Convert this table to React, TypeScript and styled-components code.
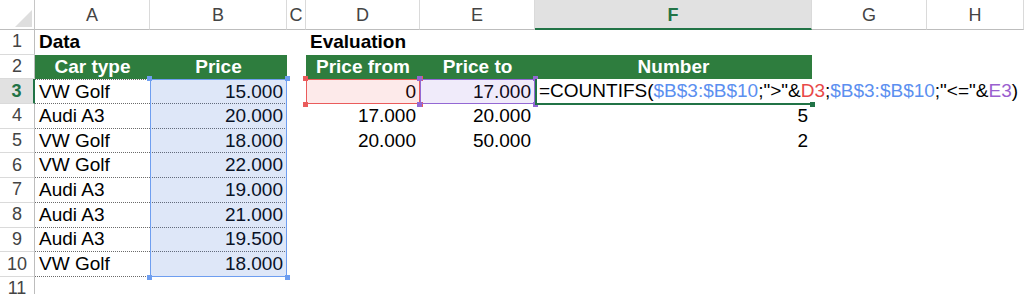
import styled, { createGlobalStyle } from 'styled-components';

const GREEN = '#2e7d3e';
const EXCEL_GREEN = '#217346';
const BLUE = '#6e9ef0';
const RED = '#ea5b5b';
const PURPLE = '#9368d4';
const REF_BLUE = '#5b8ff0';
const REF_RED = '#e84848';
const REF_PURPLE = '#9a60cf';

const GlobalStyle = createGlobalStyle`
  html, body {
    margin: 0;
    padding: 0;
    background: #ffffff;
    overflow: hidden;
  }
  body {
    font-family: "Liberation Sans", Arial, sans-serif;
  }
`;

const columns = ['A', 'B', 'C', 'D', 'E', 'F', 'G', 'H'];

const prices = [
  ['VW Golf', '15.000'],
  ['Audi A3', '20.000'],
  ['VW Golf', '18.000'],
  ['VW Golf', '22.000'],
  ['Audi A3', '19.000'],
  ['Audi A3', '21.000'],
  ['Audi A3', '19.500'],
  ['VW Golf', '18.000'],
];

const ranges = [
  ['17.000', '20.000', '5'],
  ['20.000', '50.000', '2'],
];

// sheet row n sits on grid row n + 1, column A on grid column 2
const Sheet = styled.div`
  display: grid;
  grid-template-columns: 35px 115px 137px 19px 114px 115px 277px 115px 1fr;
  grid-template-rows: 30px repeat(11, 24.7px);
  width: 1024px;
  height: 294px;
  overflow: hidden;
  font-size: 19px;
  color: #000;
`;

const Corner = styled.div`
  grid-row: 1;
  grid-column: 1;
  position: relative;
  border-right: 1px solid #c6c6c6;
  border-bottom: 1px solid #bdbdbd;

  &::after {
    content: '';
    position: absolute;
    right: 2px;
    bottom: 2px;
    border-style: solid;
    border-width: 0 0 17px 17px;
    border-color: transparent transparent #dedede transparent;
  }
`;

const ColHeader = styled.div<{ $col: number; $active?: boolean }>`
  grid-row: 1;
  grid-column: ${(p) => p.$col};
  display: flex;
  align-items: center;
  justify-content: center;
  padding-top: 2px;
  font-size: 18px;
  font-weight: ${(p) => (p.$active ? 700 : 400)};
  color: ${(p) => (p.$active ? EXCEL_GREEN : '#444')};
  background: ${(p) => (p.$active ? '#e1e1e1' : '#fff')};
  border-right: 1px solid #dadada;
  border-bottom: ${(p) => (p.$active ? `2px solid ${EXCEL_GREEN}` : '1px solid #bdbdbd')};
`;

const RowHeader = styled.div<{ $row: number; $active?: boolean }>`
  grid-row: ${(p) => p.$row + 1};
  grid-column: 1;
  display: flex;
  align-items: center;
  justify-content: center;
  font-size: 18px;
  font-weight: ${(p) => (p.$active ? 700 : 400)};
  color: ${(p) => (p.$active ? EXCEL_GREEN : '#444')};
  background: ${(p) => (p.$active ? '#e1e1e1' : '#fff')};
  border-bottom: 1px solid #dadada;
  border-right: ${(p) => (p.$active ? `2px solid ${EXCEL_GREEN}` : '1px solid #bdbdbd')};
`;

const Cell = styled.div<{
  $row: number;
  $col: number;
  $right?: boolean;
  $dotted?: boolean;
  $dottedTop?: boolean;
  $bold?: boolean;
}>`
  grid-row: ${(p) => p.$row + 1};
  grid-column: ${(p) => p.$col + 1};
  display: flex;
  align-items: center;
  justify-content: ${(p) => (p.$right ? 'flex-end' : 'flex-start')};
  padding: 0 4px 0 4px;
  white-space: nowrap;
  font-weight: ${(p) => (p.$bold ? 700 : 400)};
  border-bottom: ${(p) => (p.$dotted ? '1px dotted #6a6a6a' : 'none')};
  border-top: ${(p) => (p.$dottedTop ? '1px dotted #6a6a6a' : 'none')};
`;

const HeadCell = styled.div<{ $col: number }>`
  grid-row: 3;
  grid-column: ${(p) => p.$col + 1};
  display: flex;
  align-items: center;
  justify-content: center;
  background: ${GREEN};
  color: #fff;
  font-weight: 700;
  white-space: nowrap;
`;

const RangeBox = styled.div<{ $rows: string; $col: number; $line: string; $tint: string }>`
  grid-row: ${(p) => p.$rows};
  grid-column: ${(p) => p.$col + 1};
  position: relative;
  border: 1.5px solid ${(p) => p.$line};
  background: ${(p) => p.$tint};
  pointer-events: none;
`;

const Handle = styled.span<{ $color: string; $x: 'left' | 'right'; $y: 'top' | 'bottom' }>`
  position: absolute;
  ${(p) => p.$x}: -4px;
  ${(p) => p.$y}: -4px;
  width: 5px;
  height: 5px;
  background: ${(p) => p.$color};
`;

const EditCell = styled.div`
  grid-row: 4;
  grid-column: 7;
  position: relative;
  z-index: 2;
  display: flex;
  align-items: center;
  padding-left: 2px;
  margin-bottom: -1px;
  background: #fff;
  white-space: nowrap;
  border-left: 2px solid ${EXCEL_GREEN};
  border-bottom: 2px solid ${EXCEL_GREEN};

  &::after {
    content: '';
    position: absolute;
    right: -3px;
    bottom: -4px;
    width: 5px;
    height: 5px;
    background: ${EXCEL_GREEN};
  }
`;

const Ref = styled.span<{ $color: string }>`
  color: ${(p) => p.$color};
`;

const Caret = styled.span`
  display: inline-block;
  width: 1px;
  height: 21px;
  margin-left: 2px;
  background: #000;
`;

const RangeHandles = ({ color }: { color: string }) => (
  <>
    <Handle $color={color} $x="left" $y="top" />
    <Handle $color={color} $x="right" $y="top" />
    <Handle $color={color} $x="left" $y="bottom" />
    <Handle $color={color} $x="right" $y="bottom" />
  </>
);

export default function App() {
  return (
    <>
      <GlobalStyle />
      <Sheet>
        <Corner />
        {columns.map((c, i) => (
          <ColHeader key={c} $col={i + 2} $active={c === 'F'}>
            {c}
          </ColHeader>
        ))}
        {Array.from({ length: 11 }, (_, i) => (
          <RowHeader key={i} $row={i + 1} $active={i + 1 === 3}>
            {i + 1}
          </RowHeader>
        ))}

        <Cell $row={1} $col={1} $bold>
          Data
        </Cell>
        <Cell $row={1} $col={4} $bold>
          Evaluation
        </Cell>

        <HeadCell $col={1}>Car type</HeadCell>
        <HeadCell $col={2}>Price</HeadCell>
        <HeadCell $col={4}>Price from</HeadCell>
        <HeadCell $col={5}>Price to</HeadCell>
        <HeadCell $col={6}>Number</HeadCell>

        {prices.map(([car, price], i) => (
          <>
            <Cell key={`a${i}`} $row={i + 3} $col={1} $dotted $dottedTop={i === 0}>
              {car}
            </Cell>
            <Cell key={`b${i}`} $row={i + 3} $col={2} $right $dotted $dottedTop={i === 0}>
              {price}
            </Cell>
          </>
        ))}

        <Cell $row={3} $col={4} $right>
          0
        </Cell>
        <Cell $row={3} $col={5} $right>
          17.000
        </Cell>
        {ranges.map(([from, to, count], i) => (
          <>
            <Cell key={`d${i}`} $row={i + 4} $col={4} $right>
              {from}
            </Cell>
            <Cell key={`e${i}`} $row={i + 4} $col={5} $right>
              {to}
            </Cell>
            <Cell key={`f${i}`} $row={i + 4} $col={6} $right>
              {count}
            </Cell>
          </>
        ))}

        <RangeBox $rows="4 / 12" $col={2} $line={BLUE} $tint="rgba(60, 110, 215, 0.17)">
          <RangeHandles color={BLUE} />
        </RangeBox>
        <RangeBox $rows="4" $col={4} $line={RED} $tint="rgba(240, 60, 60, 0.11)">
          <RangeHandles color={RED} />
        </RangeBox>
        <RangeBox $rows="4" $col={5} $line={PURPLE} $tint="rgba(130, 90, 210, 0.12)">
          <RangeHandles color={PURPLE} />
        </RangeBox>

        <EditCell>
          =COUNTIFS(<Ref $color={REF_BLUE}>$B$3:$B$10</Ref>;"&gt;"&amp;<Ref $color={REF_RED}>D3</Ref>;
          <Ref $color={REF_BLUE}>$B$3:$B$10</Ref>;"&lt;="&amp;<Ref $color={REF_PURPLE}>E3</Ref>)
          <Caret />
        </EditCell>
      </Sheet>
    </>
  );
}
